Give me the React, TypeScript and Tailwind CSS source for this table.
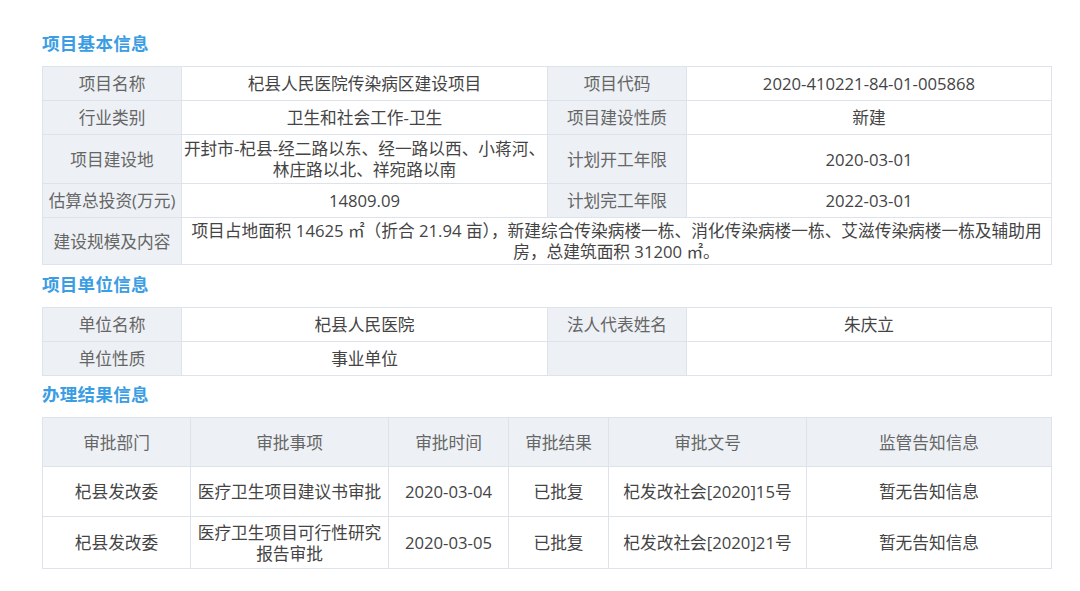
import React from "react";

const font = { fontFamily: '"Open Sans", "Noto Sans CJK SC", sans-serif' };

function Title({ children, h = "h-[42px]" }: { children: React.ReactNode; h?: string }) {
  return (
    <div className={h + " flex items-center pb-[4px] pl-[42px] text-[17.5px] font-bold text-[#3b9de3] tracking-[0.3px]"}>
      {children}
    </div>
  );
}

const L = "bg-[#edf1f5] text-[#666] text-center border border-[#dde3ea] px-1 leading-[21px]";
const V = "bg-white text-[#444] text-center border border-[#dde3ea] px-1 leading-[21px]";

export default function App() {
  return (
    <div className="w-[1080px] h-[591px] bg-white pt-[24px] text-[16.7px]" style={font}>
      <Title>项目基本信息</Title>
      <div className="pl-[42px]">
        <table className="w-[1009px] border-collapse table-fixed">
          <colgroup>
            <col className="w-[139px]" />
            <col className="w-[366px]" />
            <col className="w-[139px]" />
            <col className="w-[365px]" />
          </colgroup>
          <tbody>
            <tr className="h-[34px]">
              <td className={L}>项目名称</td>
              <td className={V}>杞县人民医院传染病区建设项目</td>
              <td className={L}>项目代码</td>
              <td className={V}>2020-410221-84-01-005868</td>
            </tr>
            <tr className="h-[34px]">
              <td className={L}>行业类别</td>
              <td className={V}>卫生和社会工作-卫生</td>
              <td className={L}>项目建设性质</td>
              <td className={V}>新建</td>
            </tr>
            <tr className="h-[49px]">
              <td className={L}>项目建设地</td>
              <td className={V + " whitespace-nowrap !px-0"}>
                开封市-杞县-经二路以东、经一路以西、小蒋河、
                <br />
                林庄路以北、祥宛路以南
              </td>
              <td className={L}>计划开工年限</td>
              <td className={V}>2020-03-01</td>
            </tr>
            <tr className="h-[34px]">
              <td className={L + " whitespace-nowrap !px-0"}>估算总投资(万元)</td>
              <td className={V}>14809.09</td>
              <td className={L}>计划完工年限</td>
              <td className={V}>2022-03-01</td>
            </tr>
            <tr className="h-[47px]">
              <td className={L}>建设规模及内容</td>
              <td className={V + " whitespace-nowrap !px-0"} colSpan={3}>
                项目占地面积 14625 ㎡（折合 21.94 亩），新建综合传染病楼一栋、消化传染病楼一栋、艾滋传染病楼一栋及辅助用
                <br />
                房，总建筑面积 31200 ㎡。
              </td>
            </tr>
          </tbody>
        </table>
      </div>

      <Title>项目单位信息</Title>
      <div className="pl-[42px]">
        <table className="w-[1009px] border-collapse table-fixed">
          <colgroup>
            <col className="w-[139px]" />
            <col className="w-[366px]" />
            <col className="w-[139px]" />
            <col className="w-[365px]" />
          </colgroup>
          <tbody>
            <tr className="h-[34px]">
              <td className={L}>单位名称</td>
              <td className={V}>杞县人民医院</td>
              <td className={L}>法人代表姓名</td>
              <td className={V}>朱庆立</td>
            </tr>
            <tr className="h-[34px]">
              <td className={L}>单位性质</td>
              <td className={V}>事业单位</td>
              <td className={L}></td>
              <td className={V}></td>
            </tr>
          </tbody>
        </table>
      </div>

      <Title h="h-[41px]">办理结果信息</Title>
      <div className="pl-[42px]">
        <table className="w-[1009px] border-collapse table-fixed">
          <colgroup>
            <col className="w-[148px]" />
            <col className="w-[198px]" />
            <col className="w-[120px]" />
            <col className="w-[100px]" />
            <col className="w-[198px]" />
            <col className="w-[245px]" />
          </colgroup>
          <thead>
            <tr className="h-[49px]">
              {["审批部门", "审批事项", "审批时间", "审批结果", "审批文号", "监管告知信息"].map((h) => (
                <th key={h} className={L + " font-normal"}>
                  {h}
                </th>
              ))}
            </tr>
          </thead>
          <tbody>
            <tr className="h-[50px]">
              <td className={V}>杞县发改委</td>
              <td className={V + " whitespace-nowrap !px-0"}>医疗卫生项目建议书审批</td>
              <td className={V}>2020-03-04</td>
              <td className={V}>已批复</td>
              <td className={V}>杞发改社会[2020]15号</td>
              <td className={V}>暂无告知信息</td>
            </tr>
            <tr className="h-[52px]">
              <td className={V}>杞县发改委</td>
              <td className={V + " whitespace-nowrap !px-0"}>
                医疗卫生项目可行性研究
                <br />
                报告审批
              </td>
              <td className={V}>2020-03-05</td>
              <td className={V}>已批复</td>
              <td className={V}>杞发改社会[2020]21号</td>
              <td className={V}>暂无告知信息</td>
            </tr>
          </tbody>
        </table>
      </div>
    </div>
  );
}
